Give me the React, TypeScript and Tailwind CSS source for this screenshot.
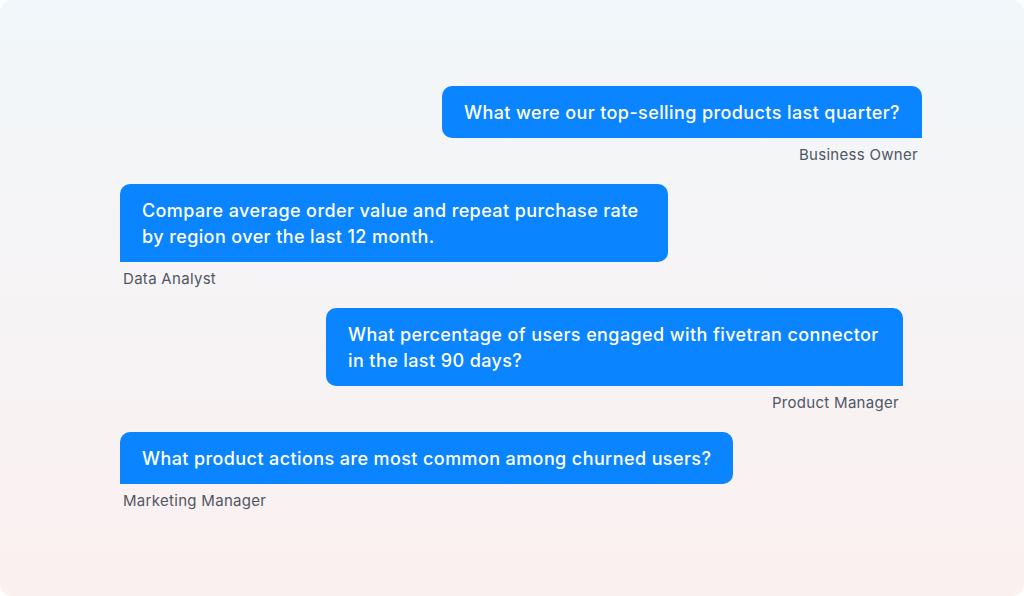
const messages = [
  {
    side: "right",
    text: "What were our top-selling products last quarter?",
    role: "Business Owner",
    offset: "mr-[102px]",
  },
  {
    side: "left",
    text: "Compare average order value and repeat purchase rate by region over the last 12 month.",
    role: "Data Analyst",
    width: "w-[548px]",
  },
  {
    side: "right",
    text: "What percentage of users engaged with fivetran connector in the last 90 days?",
    role: "Product Manager",
    offset: "mr-[121px]",
    width: "w-[577px]",
  },
  {
    side: "left",
    text: "What product actions are most common among churned users?",
    role: "Marketing Manager",
  },
];

function Bubble({ m }: { m: (typeof messages)[number] }) {
  const right = m.side === "right";
  return (
    <div className={right ? `flex flex-col items-end ${m.offset ?? ""}` : "flex flex-col items-start ml-[120px]"}>
      <div
        className={`${m.width ?? ""} bg-[#0a84ff] px-[22px] pt-[14px] pb-[12px] text-[18px] font-medium leading-[26px] tracking-[0.4px] text-white ${
          right ? "rounded-[10px] rounded-br-none" : "rounded-[10px] rounded-bl-none"
        }`}
      >
        {m.text}
      </div>
      <div
        className={`mt-[7px] text-[15px] leading-5 tracking-[0.3px] text-[#505763] ${right ? "mr-[4px]" : "ml-[3px]"}`}
      >
        {m.role}
      </div>
    </div>
  );
}

export default function App() {
  return (
    <div className="h-[596px] w-[1024px] bg-white" style={{ fontFamily: "Inter, 'Noto Sans', sans-serif" }}>
      <div className="flex h-full w-full flex-col gap-[19px] rounded-[12px] bg-gradient-to-b from-[#f1f7fa] to-[#fbf0f0] pt-[86px]">
        {messages.map((m) => (
          <Bubble key={m.role} m={m} />
        ))}
      </div>
    </div>
  );
}
